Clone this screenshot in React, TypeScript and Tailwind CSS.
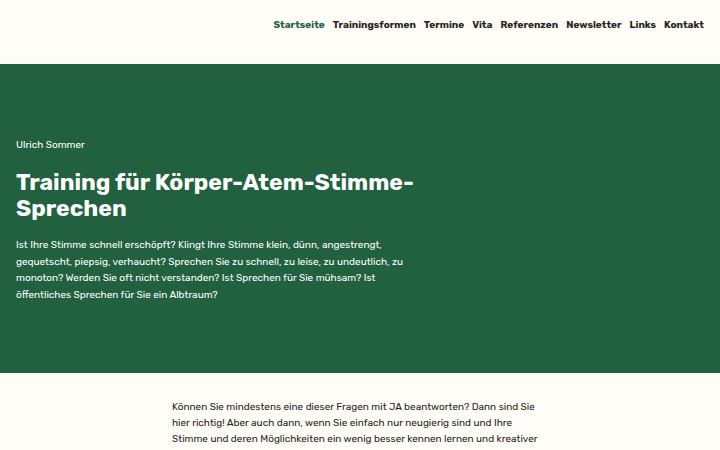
export default function App() {
  const nav = ["Startseite", "Trainingsformen", "Termine", "Vita", "Referenzen", "Newsletter", "Links", "Kontakt"];
  return (
    <div className="min-h-[450px] bg-[#fffdf8] text-[#2b2320]" style={{ fontFamily: "Rubik, Inter, 'Noto Sans', sans-serif" }}>
      <header className="h-[64px] flex items-start justify-end pr-[16px] pt-[16px]">
        <nav className="flex gap-[8px] text-[10px] font-bold leading-[16px] mt-[0.5px]">
          {nav.map((n, i) => (
            <a key={n} className={i === 0 ? "text-[#22623f]" : "text-[#2b2320]"}>{n}</a>
          ))}
        </nav>
      </header>
      <section className="bg-[#21613f] h-[309px] px-[16px] pt-[73px] text-white">
        <p className="text-[10px] leading-[16px]">Ulrich Sommer</p>
        <h1 className="mt-[16px] text-[23px] font-bold leading-[26px] w-[420px]">Training für Körper-Atem-Stimme-Sprechen</h1>
        <p className="mt-[16px] text-[10px] leading-[16.5px] w-[400px]">
          Ist Ihre Stimme schnell erschöpft? Klingt Ihre Stimme klein, dünn, angestrengt, gequetscht, piepsig, verhaucht? Sprechen Sie zu schnell, zu leise, zu undeutlich, zu monoton? Werden Sie oft nicht verstanden? Ist Sprechen für Sie mühsam? Ist öffentliches Sprechen für Sie ein Albtraum?
        </p>
      </section>
      <section className="pt-[26px] flex justify-center">
        <p className="w-[376px] text-[10px] leading-[16px]">
          Können Sie mindestens eine dieser Fragen mit JA beantworten? Dann sind Sie hier richtig! Aber auch dann, wenn Sie einfach nur neugierig sind und Ihre Stimme und deren Möglichkeiten ein wenig besser kennen lernen und kreativer einsetzen möchten.
        </p>
      </section>
    </div>
  );
}
